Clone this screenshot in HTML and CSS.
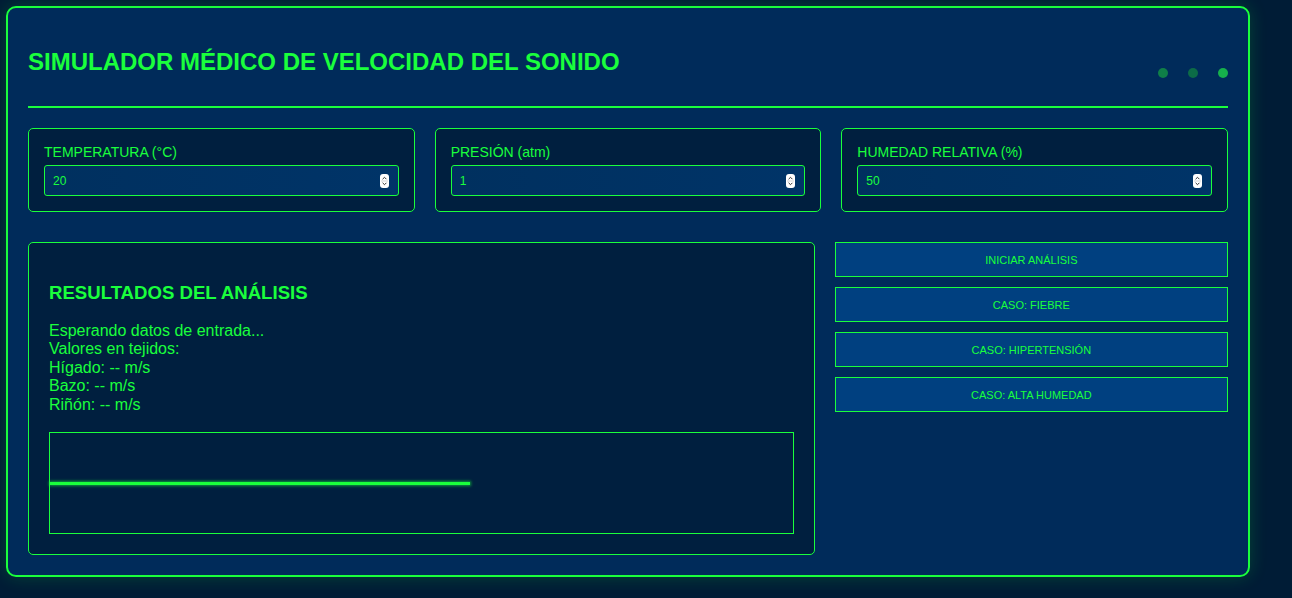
FILE: index.html
```html
<!DOCTYPE html>
<html lang="es">
<head>
<meta charset="utf-8">
<title>Simulador Médico de Velocidad del Sonido</title>
<link rel="stylesheet" href="styles.css">
</head>
<body>
<div class="app">
  <header class="header">
    <h1 class="title">SIMULADOR MÉDICO DE VELOCIDAD DEL SONIDO</h1>
    <div class="dots">
      <span class="dot dot-1"></span>
      <span class="dot dot-2"></span>
      <span class="dot dot-3"></span>
    </div>
  </header>

  <section class="params">
    <div class="param">
      <label class="param-label" for="temp">TEMPERATURA (°C)</label>
      <div class="field">
        <input class="param-input" id="temp" type="number" value="20">
        <span class="spin" aria-hidden="true"><svg viewBox="0 0 9 14" width="9" height="14"><rect x="0" y="0" width="9" height="14" rx="3" fill="#ffffff"/><path d="M2.6 5.2 L4.5 3.3 L6.4 5.2" fill="none" stroke="#333" stroke-width="1"/><path d="M2.6 8.8 L4.5 10.7 L6.4 8.8" fill="none" stroke="#333" stroke-width="1"/><line x1="1" y1="7" x2="8" y2="7" stroke="#bbb" stroke-width="0.6"/></svg></span>
      </div>
    </div>
    <div class="param">
      <label class="param-label" for="pres">PRESIÓN (atm)</label>
      <div class="field">
        <input class="param-input" id="pres" type="number" value="1">
        <span class="spin" aria-hidden="true"><svg viewBox="0 0 9 14" width="9" height="14"><rect x="0" y="0" width="9" height="14" rx="3" fill="#ffffff"/><path d="M2.6 5.2 L4.5 3.3 L6.4 5.2" fill="none" stroke="#333" stroke-width="1"/><path d="M2.6 8.8 L4.5 10.7 L6.4 8.8" fill="none" stroke="#333" stroke-width="1"/><line x1="1" y1="7" x2="8" y2="7" stroke="#bbb" stroke-width="0.6"/></svg></span>
      </div>
    </div>
    <div class="param">
      <label class="param-label" for="hum">HUMEDAD RELATIVA (%)</label>
      <div class="field">
        <input class="param-input" id="hum" type="number" value="50">
        <span class="spin" aria-hidden="true"><svg viewBox="0 0 9 14" width="9" height="14"><rect x="0" y="0" width="9" height="14" rx="3" fill="#ffffff"/><path d="M2.6 5.2 L4.5 3.3 L6.4 5.2" fill="none" stroke="#333" stroke-width="1"/><path d="M2.6 8.8 L4.5 10.7 L6.4 8.8" fill="none" stroke="#333" stroke-width="1"/><line x1="1" y1="7" x2="8" y2="7" stroke="#bbb" stroke-width="0.6"/></svg></span>
      </div>
    </div>
  </section>

  <section class="main">
    <div class="results">
      <h2 class="results-title">RESULTADOS DEL ANÁLISIS</h2>
      <div class="results-text">
        Esperando datos de entrada...<br>
        Valores en tejidos:<br>
        Hígado: -- m/s<br>
        Bazo: -- m/s<br>
        Riñón: -- m/s
      </div>
      <div class="wave">
        <div class="wave-line"></div>
      </div>
    </div>
    <div class="actions">
      <button class="btn">INICIAR ANÁLISIS</button>
      <button class="btn">CASO: FIEBRE</button>
      <button class="btn">CASO: HIPERTENSIÓN</button>
      <button class="btn">CASO: ALTA HUMEDAD</button>
    </div>
  </section>
</div>
</body>
</html>
```

FILE: styles.css
```css
* { box-sizing: border-box; }

html, body {
  margin: 0;
  height: 100%;
}

body {
  padding: 6px;
  background: #001c36;
  font-family: "Liberation Sans", Arial, sans-serif;
  color: #1aff3c;
}

.app {
  width: 1244px;
  padding: 20px;
  background: #002b5a;
  border: 2px solid #1aff3c;
  border-radius: 10px;
  box-shadow: 0 0 18px rgba(26, 255, 60, 0.18);
}

.header {
  display: flex;
  justify-content: space-between;
  align-items: flex-end;
  padding: 20px 0 30px;
  border-bottom: 2px solid #1aff3c;
}

.title {
  margin: 0;
  font-size: 24px;
  font-weight: bold;
  line-height: normal;
  color: #1aff3c;
}

.dots {
  display: flex;
  gap: 20px;
  margin-bottom: -2px;
}

.dot {
  width: 10px;
  height: 10px;
  border-radius: 50%;
}
.dot-1 { background: #0f7f48; }
.dot-2 { background: #0c6b47; }
.dot-3 { background: #16b04c; }

.params {
  display: grid;
  grid-template-columns: repeat(3, 1fr);
  gap: 20px;
  margin-top: 20px;
}

.param {
  background: #001f3f;
  border: 1px solid #1aff3c;
  border-radius: 5px;
  padding: 15px;
}

.param-label {
  display: block;
  font-size: 14px;
  line-height: 16px;
  margin-bottom: 5px;
}

.field {
  position: relative;
}

.param-input {
  display: block;
  width: 100%;
  height: 31px;
  padding: 0 8px;
  background: linear-gradient(90deg, #00305f, #003468);
  border: 1px solid #1aff3c;
  border-radius: 3px;
  color: #1aff3c;
  font-family: "Liberation Sans", Arial, sans-serif;
  font-size: 12px;
  outline: none;
  -moz-appearance: textfield;
}

.param-input::-webkit-inner-spin-button,
.param-input::-webkit-outer-spin-button {
  -webkit-appearance: none;
  margin: 0;
}

.spin {
  position: absolute;
  right: 10px;
  top: 9px;
  width: 9px;
  height: 14px;
  line-height: 0;
}

.main {
  display: grid;
  grid-template-columns: 2fr 1fr;
  gap: 20px;
  margin-top: 30px;
  align-items: start;
}

.results {
  background: #001f3f;
  border: 1px solid #1aff3c;
  border-radius: 5px;
  padding: 20px;
}

.results-title {
  margin: 19px 0 18px;
  font-size: 18.6px;
  font-weight: bold;
  line-height: normal;
}

.results-text {
  font-size: 16px;
  line-height: 18.4px;
}

.wave {
  margin-top: 18px;
  height: 102px;
  border: 1px solid #1aff3c;
  display: flex;
  align-items: center;
}

.wave-line {
  width: 420px;
  height: 3px;
  background: #1aff3c;
  box-shadow: 0 0 3px 1px rgba(26, 255, 60, 0.55);
}

.actions {
  display: flex;
  flex-direction: column;
  gap: 10px;
}

.btn {
  height: 35px;
  width: 100%;
  background: #004080;
  border: 1px solid #1aff3c;
  border-radius: 0;
  color: #1aff3c;
  font-family: "Liberation Sans", Arial, sans-serif;
  font-size: 11px;
  text-transform: uppercase;
  cursor: pointer;
}
```
